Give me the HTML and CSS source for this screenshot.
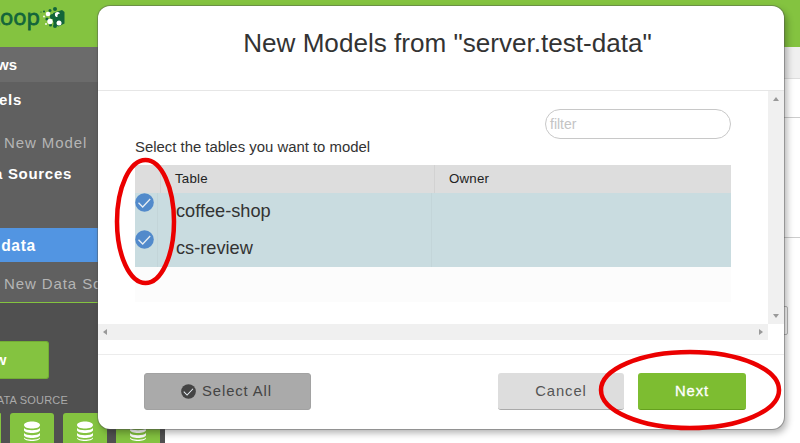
FILE: index.html
```html
<!DOCTYPE html>
<html lang="en">
<head>
<meta charset="utf-8">
<title>New Models</title>
<link rel="stylesheet" href="styles.css">
</head>
<body>
<svg class="defs" width="0" height="0">
  <symbol id="db" viewBox="0 0 16 20"><path fill="#fff" d="M0 4C0-.8 16-.8 16 4S0 8.800 0 4zM0 7c2 3 14 3 16 0v2c0 4-16 4-16 0zM0 12c2 3 14 3 16 0v2c0 4-16 4-16 0zM0 16.500c2 3 14 3 16 0v.5c0 4-16 4-16 0z"/></symbol>
  <symbol id="check" viewBox="0 0 19 19"><circle cx="9.500" cy="9.500" r="9.300" fill="currentColor"/><path d="M3.500 9.800l4.200 4.200 7.500-8" fill="none" stroke="#e8eef3" stroke-width="1.300"/></symbol>
</svg>
<div class="page">
  <header class="top">
    <span class="brand">Loop</span>
    <svg class="logo" width="25" height="22" viewBox="0 0 25 22">
      <path d="M13 6l9-3 2.500 2v11.500l-6 3-5-2z" fill="#12653a"/>
      <g fill="#12653a"><circle cx="15" cy="2" r="2"/><circle cx="10" cy="3.500" r="1.500"/><circle cx="4" cy="4.500" r="1"/><circle cx="1" cy="5" r=".6"/><circle cx="7" cy="12" r="1.600"/><circle cx="10.500" cy="18" r="1.500"/><circle cx="15" cy="19" r="2"/></g>
      <g fill="#fff"><circle cx="8" cy="7" r="2.300"/><circle cx="17.500" cy="7.500" r="2.600"/><circle cx="10" cy="14.500" r="2.700"/><circle cx="19" cy="16" r="2.500"/><circle cx="4" cy="9.500" r=".9"/><circle cx="6" cy="17" r=".9"/></g>
      <g fill="#12653a"><circle cx="12.500" cy="9.500" r="2.600"/><circle cx="20" cy="9" r="2.600"/><circle cx="15" cy="13" r="2.300"/></g>
    </svg>
  </header>
  <div class="main">
    <aside class="side">
      <div class="views"><b class="w17">ws</b></div>
      <nav class="tree">
        <b class="models w22">els</b>
        <span class="add">New Model</span>
        <b class="sources w72">a Sources</b>
        <b class="selected"><span class="w35">data</span></b>
        <span class="add last">New Data Source</span>
      </nav>
      <div class="tools">
        <div class="new"><b>w</b></div>
        <div class="cap"><span>DATA SOURCE</span></div>
        <div class="tiles"><i class="edge"></i><i><svg><use href="#db"/></svg></i><i><svg><use href="#db"/></svg></i><i><svg><use href="#db"/></svg></i></div>
      </div>
    </aside>
    <section class="content"><div class="tabs"></div><div class="line1"></div><div class="line2"></div><div class="box"></div></section>
  </div>
</div>

<div class="modal">
  <h1>New Models from "server.test-data"</h1>
  <div class="scroller">
    <div class="pane">
      <div class="filter">filter</div>
      <p><span class="prompt">Select the tables you want to model</span></p>
      <div class="grid head"><span></span><span>Table</span><span>Owner</span></div>
      <div class="grid row"><span><svg class="ck"><use href="#check"/></svg></span><span class="name">coffee-shop</span><span></span></div>
      <div class="grid row"><span><svg class="ck"><use href="#check"/></svg></span><span class="name">cs-review</span><span></span></div>
      <div class="blank"></div>
    </div>
    <div class="vbar"><i class="up"></i><i class="down"></i></div>
    <div class="hbar"><i class="lt"></i><i class="rt"></i></div>
  </div>
  <footer>
    <div class="btn all"><svg class="ck2"><use href="#check"/></svg><span>Select All</span></div>
    <div class="btn cancel">Cancel</div>
    <div class="btn next">Next</div>
  </footer>
</div>
<svg class="marks" width="800" height="443" fill="none" stroke="#eb0000" stroke-width="4.500"><ellipse cx="145.500" cy="221.500" rx="28.500" ry="61.500"/><ellipse cx="690" cy="390" rx="89" ry="38"/></svg>
</body>
</html>
```
FILE: styles.css
```css
* { box-sizing: border-box; }
body { margin: 0; width: 800px; height: 443px; overflow: hidden; font-family: "Liberation Sans", Arial, sans-serif; background: #fff; }
.defs { position: absolute; }
.page { height: 443px; display: flex; flex-direction: column; }
.top { height: 47px; background: #84c340; display: flex; align-items: flex-start; }
.brand { width: 40px; display: flex; justify-content: flex-end; font: 22px/33px "Open Sans", sans-serif; -webkit-text-stroke: .8px #12653a; color: #12653a; }
.logo { margin: 7px 0 0 0; }
.main { flex: 1; display: flex; min-height: 0; }
.side { width: 165px; overflow: hidden; background: #505050; color: #fff; font-size: 15px; letter-spacing: .7px; white-space: nowrap; display: flex; flex-direction: column; }
.side b { display: flex; justify-content: flex-end; }
.views { height: 36px; background: #6b6b6b; line-height: 35px; }
.views b { letter-spacing: 0; }
.w17 { width: 17px; }
.w22 { width: 22px; }
.w72 { width: 72px; }
.w35 { width: 36px; display: flex; justify-content: flex-end; }
.tree { height: 221px; background: #606060; border-bottom: 1px solid #84c340; display: flex; flex-direction: column; }
.tree b, .tree span { flex: none; }
.models { height: 35px; line-height: 36px; }
.add { height: 42px; line-height: 52px; padding-left: 4px; color: #b5b5b5; letter-spacing: .9px; }
.sources { height: 68px; line-height: 30px; }
.tree .selected { height: 35px; line-height: 37px; background: linear-gradient(#606060 1px, #5295e2 1px); font-size: 15.600px; justify-content: flex-start; }
.last { line-height: 44px; }
.tools { flex: 1; padding-top: 37px; }
.new { width: 49px; height: 38px; background: #84c340; border: 1px solid #72ad34; border-left: 0; border-radius: 0 3px 3px 0; line-height: 35px; margin-top: 1px; }
.new b { width: 7px; }
.cap { width: 68px; height: 34px; display: flex; justify-content: flex-end; font-size: 11px; line-height: 43px; letter-spacing: .2px; color: #aaa; }
.tiles { display: flex; gap: 9px; }
.tiles i { flex: none; width: 44px; height: 34px; border-radius: 3px; background: #84c340; display: flex; justify-content: center; padding-top: 8px; }
.tiles .edge { width: 1px; }
.tiles svg { width: 16px; height: 20px; }
.content { flex: 1; }
.tabs { height: 32px; background: #f0f0f0; border-bottom: 1px solid #ddd; }
.line1 { height: 39px; border-bottom: 1px solid #ccc; }
.line2 { height: 120px; border-bottom: 1px solid #ccc; }
.box { width: 623px; height: 29px; margin-top: 68px; border: 1px solid #bbb; border-radius: 2px; }
.modal { position: absolute; left: 98px; top: 6px; width: 686px; height: 423px; border-radius: 12px; background: #fff; box-shadow: 0 0 0 1px rgba(80,80,80,.4), 3px 4px 7px rgba(0,0,0,.3); display: flex; flex-direction: column; color: #333; }
h1 { margin: 0; height: 85px; border-bottom: 1px solid #e6e6e6; font-size: 26.100px; font-weight: 400; line-height: 74px; text-align: center; padding-left: 13px; white-space: nowrap; }
.scroller { height: 249px; display: grid; grid-template: 233px 16px / 670px 16px; }
.pane { padding: 18px 37px 0; }
.filter { width: 186px; height: 30px; margin-left: auto; border: 1px solid #c8c8c8; border-radius: 15px; padding-left: 4px; line-height: 29px; font-size: 14px; color: #c4c4c4; }
p { margin: 0; height: 26px; font-size: 14.900px; line-height: 17px; }
.grid { display: grid; grid-template-columns: 26px 274px 1fr; }
.head { height: 28px; background: #ddd; font-size: 13.300px; line-height: 28px; color: #222; letter-spacing: .2px; }
.head span + span { padding-left: 14px; }
.head span:not(:last-child) { border-right: 1px solid #d2d2d2; }
.row { height: 37px; grid-template-columns: 23px 274px 1fr; background: #c9dce0; }
.row span:not(:last-child) { border-right: 1px solid #c3d5d9; }
.name { padding-left: 18px; font-size: 18.200px; line-height: 37px; }
.ck { display: block; width: 19px; height: 19px; color: #528acb; }
.blank { height: 35px; background: #fcfcfc; }
.vbar, .hbar { background: #f0f0f0; display: flex; justify-content: space-between; align-items: center; }
.vbar { flex-direction: column; padding: 6px 0; }
.hbar { padding: 0 5px; }
.up, .down, .lt, .rt { border: 3px solid transparent; }
.up { border-top: 0; border-bottom: 4px solid #999; }
.down { border-bottom: 0; border-top: 4px solid #999; }
.lt { border-left: 0; border-right: 4px solid #999; }
.rt { border-right: 0; border-left: 4px solid #999; }
footer { margin-top: 14px; height: 75px; border-top: 1px solid #ececec; padding: 18px 38px 0 46px; display: flex; }
.btn { height: 37px; border-radius: 3px; display: flex; align-items: center; justify-content: center; font-size: 14.800px; letter-spacing: .9px; padding-bottom: 1px; }
.all { width: 167px; background: #aaa; border: 1px solid #a2a2a2; gap: 6px; color: #444; padding-right: 2px; }
.ck2 { width: 15px; height: 15px; color: #444; }
.cancel { width: 126px; margin-left: 187px; background: #ddd; border-bottom: 1px solid #aaa; color: #555; }
.next { width: 108px; margin-left: 14px; background: #7dbd31; border-bottom: 1px solid #65a01f; color: #fff; -webkit-text-stroke: .3px #fff; }
.marks { position: absolute; left: 0; top: 0; }
```
